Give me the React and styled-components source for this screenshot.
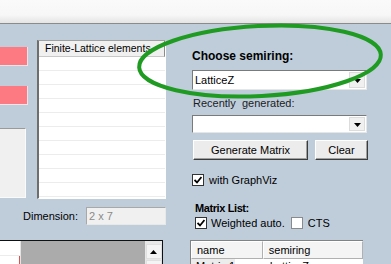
import React from 'react';
import styled, { createGlobalStyle } from 'styled-components';

const Global = createGlobalStyle`
  html, body {
    margin: 0;
    padding: 0;
    width: 391px;
    height: 264px;
    overflow: hidden;
    font-family: "Liberation Sans", Arial, sans-serif;
    font-size: 11px;
    color: #000;
  }
`;

const Page = styled.div`
  position: relative;
  width: 391px;
  height: 264px;
  overflow: hidden;
`;

const TopBar = styled.div`
  height: 23px;
  background: linear-gradient(#fafafa 0%, #f7f7f7 65%, #e4e4e4 100%);
  border-bottom: 1px solid #8b8b8b;
`;

const Main = styled.div`
  display: flex;
  height: 240px;
  background: #bfcddb;
  overflow: hidden;
`;

const LeftArea = styled.div`
  width: 170px;
  display: flex;
  flex-direction: column;
  & > * { flex-shrink: 0; }
`;

const TopRow = styled.div`
  display: flex;
  align-items: flex-start;
`;

const LeftStack = styled.div`
  width: 28px;
  margin-top: 23px;
  display: flex;
  flex-direction: column;
  & > * { flex-shrink: 0; }
`;

const PinkField = styled.div`
  height: 18px;
  margin-top: ${p => p.$gap || 0}px;
  background: #fd7a82;
  border-right: 1px solid #f2e4e6;
  border-bottom: 1px solid #f2e4e6;
`;

const GrayField = styled.div`
  height: 68px;
  width: 25px;
  margin-top: 23px;
  background: #f0f0f0;
  border-top: 1px solid #9a9a9a;
  border-right: 1px solid #fafafa;
  border-bottom: 1px solid #fafafa;
`;

const ListBox = styled.div`
  margin-left: 9px;
  margin-top: 16px;
  width: 126px;
  height: 157px;
  background: #fff;
  border-top: 1px solid #a0a0a0;
  border-left: 2px solid #6e6e6e;
  border-right: 1px solid #fff;
  border-bottom: 1px solid #fff;
  overflow: hidden;
`;

const ListHeader = styled.div`
  height: 15px;
  line-height: 15px;
  padding-left: 6px;
  font-size: 10.5px;
  background: #f0f0f0;
  border-right: 1px solid #8c8c8c;
  border-bottom: 1px solid #c8c8c8;
  white-space: nowrap;
  overflow: hidden;
`;

const ListRow = styled.div`
  height: 13px;
  border-bottom: 1px solid #ececec;
`;

const DimensionRow = styled.div`
  display: flex;
  align-items: center;
  margin-top: 8px;
  padding-left: 23px;
`;

const DimLabel = styled.span`
  width: 63px;
`;

const DimInput = styled.div`
  width: 76px;
  height: 16px;
  line-height: 16px;
  padding-left: 2px;
  color: #8a8a8a;
  background: #f0f0f0;
  border-top: 1px solid #a8a8a8;
  border-left: 1px solid #a8a8a8;
  border-right: 1px solid #e8e8e8;
  border-bottom: 1px solid #e8e8e8;
`;

const Grid = styled.div`
  margin-top: 15px;
  width: 162px;
  height: 30px;
  display: flex;
  border-top: 1px solid #101010;
  border-right: 1px solid #101010;
  background: #ababab;
`;

const GridHeaderCol = styled.div`
  width: 20px;
  background: #fff;
  border-right: 1px solid #e4e4e4;
  display: flex;
  flex-direction: column;
`;

const GridCell = styled.div`
  height: 14px;
  flex-shrink: 0;
  border-bottom: 1px solid #ececec;
  border-right: ${p => (p.$red ? '1px solid #e05050' : 'none')};
`;

const GridBody = styled.div`
  flex: 1;
`;

const ScrollBar = styled.div`
  width: 17px;
  background: #e8e8e8;
  display: flex;
  flex-direction: column;
  align-items: center;
  padding-top: 3px;
`;

const ScrollButton = styled.div`
  width: 14px;
  height: 13px;
  flex-shrink: 0;
  background: #f4f4f4;
  border: 1px solid #e0e0e0;
  display: flex;
  align-items: center;
  justify-content: center;
  margin-bottom: 1px;
`;

const RightPanel = styled.div`
  margin-left: 20px;
  width: 180px;
  display: flex;
  flex-direction: column;
  & > * { flex-shrink: 0; }
`;

const Heading = styled.div`
  font-weight: bold;
  font-size: ${p => p.$size || 12}px;
  line-height: 14px;
  margin-top: ${p => p.$top}px;
  margin-left: ${p => p.$left}px;
  letter-spacing: ${p => p.$spacing || 0}px;
`;

const Label = styled.div`
  margin-top: 7px;
  margin-left: 3px;
  line-height: 13px;
  white-space: pre;
  color: #1c1c1c;
`;

const Combo = styled.div`
  margin-top: ${p => p.$top}px;
  margin-left: 2px;
  width: 173px;
  height: ${p => p.$height}px;
  display: flex;
  align-items: stretch;
  background: #fff;
  border-top: 1px solid #7a7a7a;
  border-left: 1px solid #7a7a7a;
  border-right: 1px solid #e6e6e6;
  border-bottom: 1px solid #e6e6e6;
`;

const ComboText = styled.div`
  flex: 1;
  padding-left: 2px;
  display: flex;
  align-items: center;
`;

const ComboButton = styled.div`
  width: 14px;
  margin: 1px;
  background: #f0f0f0;
  border: 1px solid #dcdcdc;
  display: flex;
  align-items: center;
  justify-content: center;
  padding-top: 2px;
`;

const ButtonRow = styled.div`
  display: flex;
  gap: 7px;
  margin-top: 7px;
  margin-left: 3px;
`;

const Button = styled.div`
  width: ${p => p.$w}px;
  height: 18px;
  line-height: 18px;
  text-align: center;
  background: #ececec;
  border-top: 1px solid #fff;
  border-left: 1px solid #fff;
  border-right: 1px solid #3c3c3c;
  border-bottom: 1px solid #3c3c3c;
  box-shadow: inset -1px -1px 0 #a0a0a0;
`;

const CheckRow = styled.div`
  display: flex;
  align-items: center;
  height: 13px;
  margin-top: ${p => p.$top}px;
  margin-left: ${p => p.$left}px;
`;

const Box = styled.span`
  width: 10px;
  height: 10px;
  background: #fff;
  border: 1px solid ${p => (p.$checked ? '#333' : '#8a8a8a')};
  display: flex;
  align-items: center;
  justify-content: center;
  margin-right: ${p => p.$gap || 5}px;
  margin-left: ${p => p.$left || 0}px;
`;

const Table = styled.div`
  margin-top: 11px;
  width: 172px;
  border-top: 1px solid #828282;
  border-left: 1px solid #828282;
  background: #fff;
`;

const TableRow = styled.div`
  display: flex;
  height: ${p => p.$h}px;
`;

const HeadCell = styled.div`
  width: ${p => p.$w}px;
  padding-left: 5px;
  line-height: 16px;
  background: #f4f4f4;
  border-top: 1px solid #fff;
  border-left: 1px solid #fff;
  border-right: 1px solid #b0b0b0;
  border-bottom: 1px solid #b0b0b0;
`;

const Cell = styled.div`
  width: ${p => p.$w}px;
  padding-left: 5px;
  line-height: 15px;
  background: ${p => p.$bg || '#fff'};
`;

const Annotation = styled.svg`
  position: absolute;
  left: 0;
  top: 0;
  pointer-events: none;
`;

const Arrow = ({ up }) => (
  <svg width="7" height="4" viewBox="0 0 7 4">
    <path d={up ? 'M0 4 L3.5 0 L7 4 Z' : 'M0 0 L7 0 L3.5 4 Z'} fill="#000" />
  </svg>
);

const Check = ({ checked, left, gap, children }) => (
  <>
    <Box $checked={checked} $left={left} $gap={gap}>
      {checked && (
        <svg width="8" height="8" viewBox="0 0 8 8">
          <path d="M0.5 4 L3 6.5 L7.5 1" stroke="#000" strokeWidth="1.8" fill="none" />
        </svg>
      )}
    </Box>
    {children}
  </>
);

export default function App() {
  return (
    <Page>
      <Global />
      <TopBar />
      <Main>
        <LeftArea>
          <TopRow>
            <LeftStack>
              <PinkField />
              <PinkField $gap={20} />
              <GrayField />
            </LeftStack>
            <ListBox>
              <ListHeader>Finite-Lattice elements.</ListHeader>
              {Array.from({ length: 10 }).map((_, i) => (
                <ListRow key={i} />
              ))}
            </ListBox>
          </TopRow>
          <DimensionRow>
            <DimLabel>Dimension:</DimLabel>
            <DimInput>2 x 7</DimInput>
          </DimensionRow>
          <Grid>
            <GridHeaderCol>
              <GridCell />
              <GridCell $red />
            </GridHeaderCol>
            <GridBody />
            <ScrollBar>
              <ScrollButton>
                <Arrow up />
              </ScrollButton>
              <ScrollButton />
            </ScrollBar>
          </Grid>
        </LeftArea>

        <RightPanel>
          <Heading $top={25} $left={2}>Choose semiring:</Heading>
          <Combo $top={7} $height={18}>
            <ComboText>LatticeZ</ComboText>
            <ComboButton><Arrow /></ComboButton>
          </Combo>
          <Label>Recently  generated:</Label>
          <Combo $top={5} $height={16}>
            <ComboText />
            <ComboButton><Arrow /></ComboButton>
          </Combo>
          <ButtonRow>
            <Button $w={113}>Generate Matrix</Button>
            <Button $w={51}>Clear</Button>
          </ButtonRow>
          <CheckRow $top={13} $left={2}>
            <Check checked>with GraphViz</Check>
          </CheckRow>
          <Heading $top={15} $left={5} $size={11} $spacing={-0.4}>Matrix List:</Heading>
          <CheckRow $top={1} $left={5}>
            <Check checked gap={4}>Weighted auto.</Check>
            <Check left={6}>CTS</Check>
          </CheckRow>
          <Table>
            <TableRow $h={18}>
              <HeadCell $w={66}>name</HeadCell>
              <HeadCell $w={95}>semiring</HeadCell>
            </TableRow>
            <TableRow $h={15}>
              <Cell $w={40} $bg="#ececec">Matrix 1</Cell>
              <Cell $w={25} />
              <Cell $w={95}>LatticeZ</Cell>
            </TableRow>
          </Table>
        </RightPanel>
      </Main>
      <Annotation width="391" height="264">
        <ellipse
          cx="260"
          cy="61"
          rx="121"
          ry="35"
          transform="rotate(-3 260 61)"
          fill="none"
          stroke="#1f9b22"
          strokeWidth="4"
        />
      </Annotation>
    </Page>
  );
}
